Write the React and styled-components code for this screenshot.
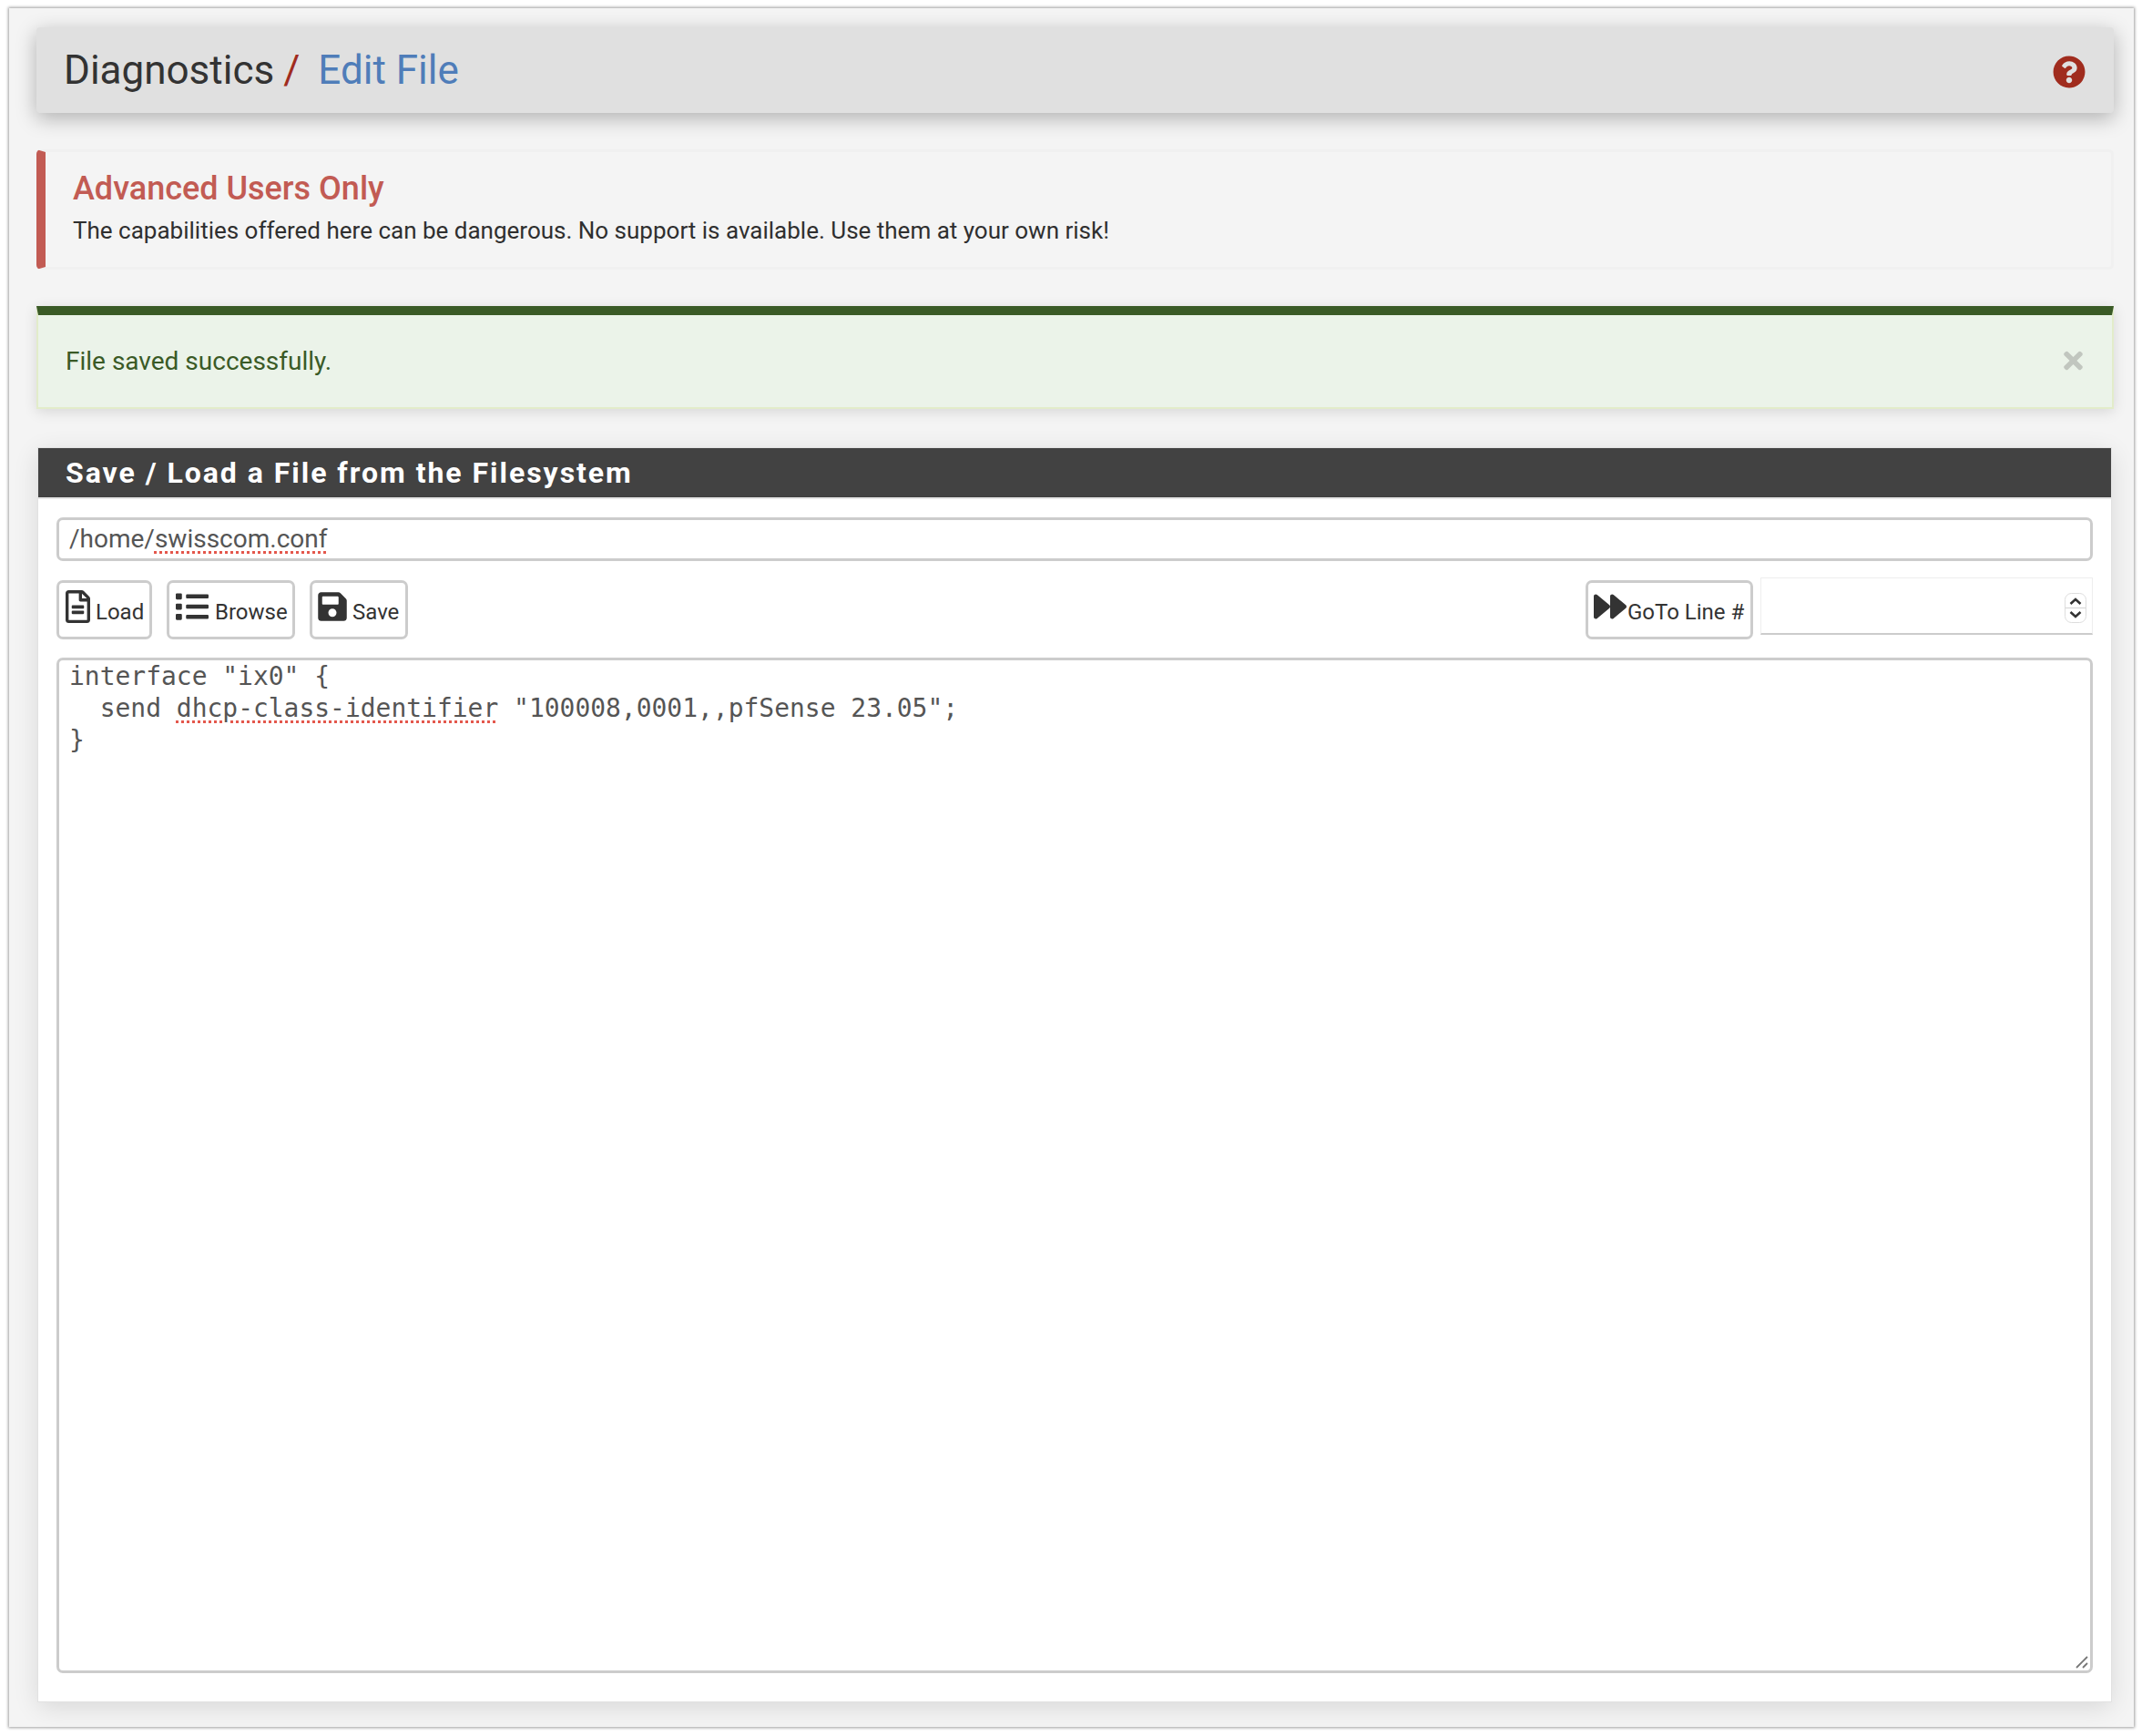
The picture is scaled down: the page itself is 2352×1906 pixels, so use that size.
import React from "react";
import styled, { createGlobalStyle } from "styled-components";
import { FaRegFileAlt, FaList, FaSave, FaForward, FaQuestionCircle, FaTimes } from "react-icons/fa";

const Global = createGlobalStyle`
  html, body { margin: 0; padding: 0; background: #fff; }
  * { box-sizing: border-box; }
`;

const Page = styled.div`
  width: 2352px;
  height: 1906px;
  padding: 9px 9px 10px 10px;
  font-family: Roboto, "Liberation Sans", sans-serif;
`;

const Frame = styled.div`
  height: 100%;
  background: #f4f4f4;
  box-shadow: 0 0 3px 1px rgba(0, 0, 0, 0.38);
  padding: 21px 22px 28px 30px;
  display: flex;
  flex-direction: column;
`;

const Header = styled.header`
  height: 94px;
  flex: none;
  background: #e0e0e0;
  border-radius: 4px;
  box-shadow: 0 6px 22px rgba(0, 0, 0, 0.28);
  display: flex;
  align-items: center;
  justify-content: space-between;
  padding: 0 31px 0 30px;
`;

const Crumbs = styled.h1`
  margin: 0;
  font-size: 44px;
  font-weight: 400;
  color: #333;
  line-height: 1;
`;

const Slash = styled.span`
  color: #a02c1e;
  margin: 0 20px 0 10px;
`;

const CrumbLink = styled.span`
  color: #4f7db9;
`;

const Help = styled(FaQuestionCircle)`
  color: #a02c1e;
  width: 36px;
  height: 36px;
  display: block;
  margin-top: 3px;
`;

const Warning = styled.section`
  margin-top: 40px;
  height: 132px;
  flex: none;
  background: #f4f4f4;
  border: 3px solid #f0f0f0;
  border-left: 10px solid #c25b53;
  border-radius: 5px;
  padding: 18px 0 0 30px;
`;

const WarningTitle = styled.h4`
  margin: 0;
  font-size: 36px;
  font-weight: 500;
  line-height: 44px;
  color: #c25b53;
`;

const WarningText = styled.p`
  margin: 3px 0 0;
  font-size: 26px;
  line-height: 42px;
  color: #2f2f2f;
`;

const Success = styled.section`
  margin-top: 40px;
  height: 113px;
  flex: none;
  background: #ebf3e9;
  border: 2px solid #e2ecca;
  border-top: 10px solid #3a5a26;
  box-shadow: 0 3px 14px rgba(0, 0, 0, 0.12);
  display: flex;
  align-items: center;
  justify-content: space-between;
  padding: 0 32px 0 30px;
  color: #3a5a26;
  font-size: 28px;
`;

const Close = styled(FaTimes)`
  color: #c1c6bf;
  width: 21px;
  height: 30px;
  display: block;
  margin-bottom: 2px;
`;

const Panel = styled.section`
  margin: 43px 3px 0 2px;
  flex: 1;
  min-height: 0;
  background: #fff;
  box-shadow: 0 0 0 1px #e2e2e2, 0 6px 26px rgba(0, 0, 0, 0.12);
  display: flex;
  flex-direction: column;
`;

const PanelHeading = styled.h2`
  margin: 0;
  height: 54px;
  flex: none;
  background: #424242;
  color: #fff;
  font-size: 32px;
  font-weight: 700;
  letter-spacing: 1.97px;
  line-height: 55px;
  padding-left: 30px;
`;

const PanelBody = styled.div`
  flex: 1;
  min-height: 0;
  border-top: 2px solid #e6e6e6;
  padding: 20px 20px 31px;
  display: flex;
  flex-direction: column;
`;

const PathField = styled.div`
  height: 48px;
  flex: none;
  border: 3px solid #ccc;
  border-radius: 7px;
  padding: 0 11px;
  font-size: 28px;
  line-height: 42px;
  color: #555;
`;

const Misspelled = styled.span`
  text-decoration: underline dotted #e4574c 3px;
  text-underline-offset: 4px;
`;

const Toolbar = styled.div`
  margin-top: 18px;
  height: 67px;
  flex: none;
  display: flex;
  align-items: flex-start;
`;

const Button = styled.div`
  height: 65px;
  margin-top: 3px;
  margin-right: 16px;
  width: ${(p) => p.$w}px;
  border: 3px solid #ccc;
  border-radius: 7px;
  background: #fff;
  color: #333;
  font-size: 24px;
  padding: 8px 0 0 ${(p) => p.$pad}px;
  display: flex;
  align-items: flex-start;
  gap: ${(p) => p.$gap}px;
  line-height: 1;
  white-space: nowrap;
`;

const ButtonLabel = styled.span`
  margin-top: 12px;
`;

const DocIcon = styled(FaRegFileAlt)`
  flex: none;
  width: 27px;
  height: 36px;
`;

const ListIcon = styled(FaList)`
  flex: none;
  width: 36px;
  height: 36px;
`;

const SaveIcon = styled(FaSave)`
  flex: none;
  width: 32px;
  height: 36px;
`;

const ForwardIcon = styled(FaForward)`
  flex: none;
  width: 36px;
  height: 36px;
`;

const Spacer = styled.div`
  flex: 1;
`;

const LineInput = styled.div`
  width: 365px;
  height: 63px;
  margin-left: -8px;
  background: #fff;
  border-top: 1px solid #eee;
  border-right: 1px solid #eee;
  border-left: 1px solid #eee;
  border-bottom: 2px solid #ccc;
  display: flex;
  align-items: center;
  justify-content: flex-end;
  padding: 5px 6px 0 0;
`;

const Code = styled.div`
  position: relative;
  flex: 1;
  min-height: 0;
  margin-top: 21px;
  border: 3px solid #ccc;
  border-radius: 7px;
  padding: 0 11px;
  font-family: "DejaVu Sans Mono", "Liberation Mono", monospace;
  font-size: 27.96px;
  line-height: 35px;
  color: #555;
  white-space: pre;
`;

const Grip = styled.svg`
  position: absolute;
  right: 0;
  bottom: 0;
  width: 18px;
  height: 18px;
`;

export default function App() {
  return (
    <Page>
      <Global />
      <Frame>
        <Header>
          <Crumbs>
            Diagnostics<Slash>/</Slash>
            <CrumbLink>Edit File</CrumbLink>
          </Crumbs>
          <Help />
        </Header>

        <Warning>
          <WarningTitle>Advanced Users Only</WarningTitle>
          <WarningText>
            The capabilities offered here can be dangerous. No support is available. Use them at your own risk!
          </WarningText>
        </Warning>

        <Success>
          <span>File saved successfully.</span>
          <Close />
        </Success>

        <Panel>
          <PanelHeading>Save / Load a File from the Filesystem</PanelHeading>
          <PanelBody>
            <PathField>
              /home/<Misspelled>swisscom.conf</Misspelled>
            </PathField>
            <Toolbar>
              <Button $w={105} $pad={7} $gap={6}>
                <DocIcon />
                <ButtonLabel>Load</ButtonLabel>
              </Button>
              <Button $w={141} $pad={7} $gap={7}>
                <ListIcon />
                <ButtonLabel>Browse</ButtonLabel>
              </Button>
              <Button $w={108} $pad={6} $gap={6}>
                <SaveIcon />
                <ButtonLabel>Save</ButtonLabel>
              </Button>
              <Spacer />
              <Button $w={184} $pad={6} $gap={1}>
                <ForwardIcon />
                <ButtonLabel>GoTo Line #</ButtonLabel>
              </Button>
              <LineInput>
                <svg width="24" height="33" viewBox="0 0 24 33">
                  <rect x="0.5" y="0.5" width="23" height="32" rx="7" fill="#fff" stroke="#ddd" />
                  <path d="M1 16.5H23" stroke="#d4d4d4" />
                  <path d="M6.5 12l5.5-5 5.5 5M6.5 21l5.5 5 5.5-5" fill="none" stroke="#333" strokeWidth="2.6" />
                </svg>
              </LineInput>
            </Toolbar>
            <Code>
              {'interface "ix0" {\n  send '}
              <Misspelled>dhcp-class-identifier</Misspelled>
              {' "100008,0001,,pfSense 23.05";\n}'}
              <Grip viewBox="0 0 18 18">
                <path d="M3 15L15 3M10 15l5-5" stroke="#777" strokeWidth="1.8" />
              </Grip>
            </Code>
          </PanelBody>
        </Panel>
      </Frame>
    </Page>
  );
}
